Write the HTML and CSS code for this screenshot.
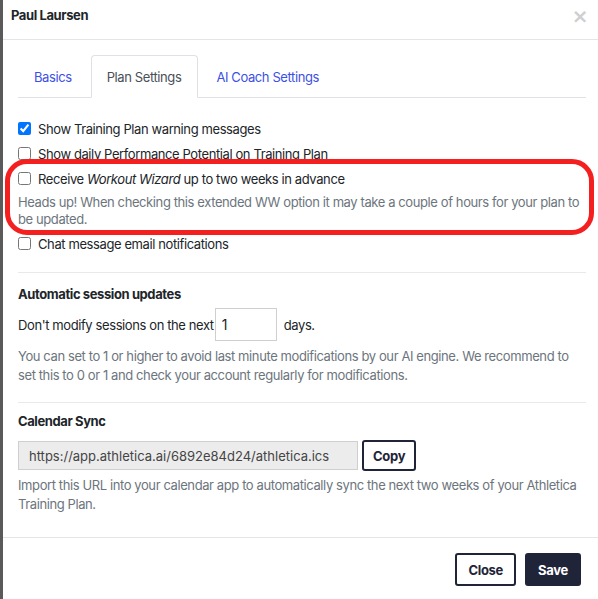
FILE: index.html
```html
<!DOCTYPE html>
<html lang="en">
<head>
    <meta charset="UTF-8">
    <title>Plan Settings</title>
    <link rel="stylesheet" href="styles.css">
</head>
<body>
    <div class="backdrop-edge"></div>
    <div class="modal">
        <div class="modal-header">
            <span class="modal-title">Paul Laursen</span>
            <span class="close-x">&times;</span>
        </div>

        <div class="modal-body">
            <ul class="tabs">
                <li class="tab"><a href="#">Basics</a></li>
                <li class="tab active"><a href="#">Plan Settings</a></li>
                <li class="tab"><a href="#">AI Coach Settings</a></li>
            </ul>

            <div class="section first">
                <label class="check-row"><input type="checkbox" checked> Show Training Plan warning messages</label>
                <label class="check-row"><input type="checkbox"> Show daily Performance Potential on Training Plan</label>
                <div class="highlight">
                    <label class="check-row"><input type="checkbox"> Receive&nbsp;<em>Workout Wizard</em>&nbsp;up to two weeks in advance</label>
                    <p class="help tight">Heads up! When checking this extended WW option it may take a couple of hours for your plan to be updated.</p>
                    <span class="ring"></span>
                </div>
                <label class="check-row"><input type="checkbox"> Chat message email notifications</label>
            </div>

            <div class="section updates">
                <h4>Automatic session updates</h4>
                <div class="inline-row days-row">
                    <span>Don't modify sessions on the next</span>
                    <input type="text" class="days-input" value="1">
                    <span>days.</span>
                </div>
                <p class="help">You can set to 1 or higher to avoid last minute modifications by our AI engine. We recommend to set this to 0 or 1 and check your account regularly for modifications.</p>
            </div>

            <div class="section last">
                <h4>Calendar Sync</h4>
                <div class="inline-row sync-row">
                    <input type="text" class="url-input" value="https://app.athletica.ai/6892e84d24/athletica.ics" readonly>
                    <button class="btn btn-outline">Copy</button>
                </div>
                <p class="help">Import this URL into your calendar app to automatically sync the next two weeks of your Athletica Training Plan.</p>
            </div>
        </div>

        <div class="modal-footer">
            <button class="btn btn-outline big">Close</button>
            <button class="btn btn-dark big">Save</button>
        </div>
    </div>
</body>
</html>
```

FILE: styles.css
```css
html, body {
    margin: 0;
    padding: 0;
    height: 100%;
    overflow: hidden;
}

body {
    font-family: 'Inter', 'Liberation Sans', sans-serif;
    font-size: 13px;
    letter-spacing: -0.4px;
    color: #212529;
    background: #5a5a5a;
    display: flex;
}

.backdrop-edge {
    width: 3px;
    flex-shrink: 0;
}

.modal {
    width: 598px;
    flex-shrink: 0;
    background: #fff;
    position: relative;
}

.modal-header {
    height: 39px;
    border-bottom: 1px solid #e5e5e5;
    display: flex;
    align-items: center;
    justify-content: space-between;
    padding: 0 13px 0 8px;
}

.modal-title {
    font-weight: 700;
    font-size: 13px;
    margin-top: -9px;
}

.close-x {
    font-family: 'DejaVu Sans', sans-serif;
    font-size: 20px;
    font-weight: 700;
    color: #cfcfcf;
    margin-top: -8px;
}

.modal-body {
    padding: 15px 15px 0 15px;
}

/* tabs */
.tabs {
    list-style: none;
    margin: 0;
    padding: 0;
    display: flex;
    border-bottom: 1px solid #dee2e6;
    height: 42px;
}

.tab {
    margin-right: 2px;
    margin-bottom: -1px;
    border: 1px solid transparent;
    border-radius: 4px 4px 0 0;
    display: flex;
    align-items: center;
    padding: 0 16px 0 15px;
}

.tab a {
    color: #3d50e6;
    text-decoration: none;
}

.tab.active {
    border-color: #dee2e6 #dee2e6 #fff;
    background: #fff;
}

.tab.active a {
    color: #495057;
}

/* sections */
.section {
    border-bottom: 1px solid #e9e9e9;
}

.section.first {
    padding: 18px 0 16px;
}

.section.updates {
    padding: 11px 0 17px;
}

.section.last {
    border-bottom: none;
    padding: 8px 0 0;
}

.check-row {
    display: flex;
    align-items: center;
    height: 25px;
}

.check-row input {
    width: 13px;
    height: 13px;
    margin: 0 7px 0 0;
}

.highlight {
    position: relative;
    padding-bottom: 3px;
}

.ring {
    position: absolute;
    left: -13px;
    top: -7px;
    right: -8px;
    bottom: -4px;
    border: 5px solid #f41f1f;
    border-radius: 22px;
    pointer-events: none;
}

.help {
    color: #6c757d;
    margin: 0;
    line-height: 19px;
}

.help.tight {
    line-height: 17px;
    margin-top: 3px;
}

h4 {
    margin: 0;
    font-size: 13px;
    font-weight: 700;
    line-height: 20px;
}

.inline-row {
    display: flex;
    align-items: center;
}

.days-row {
    margin: 4px 0 6px;
}

.sync-row {
    margin: 9px 0 5px;
}

.days-input {
    width: 48px;
    height: 31px;
    margin: 0 7px 0 1px;
    padding: 0 6px;
    border: 1px solid #cfcfcf;
    font: inherit;
    font-size: 14px;
    color: #212529;
    box-sizing: content-box;
}

.url-input {
    width: 318px;
    height: 27px;
    margin: 0 4px 0 0;
    padding: 0 10px;
    border: 1px solid #cfcfcf;
    background: #ececec;
    font: inherit;
    color: #444;
    box-sizing: content-box;
}

.btn {
    font-family: inherit;
    font-size: 13px;
    font-weight: 700;
    letter-spacing: -0.3px;
    border-radius: 3px;
    cursor: pointer;
    padding: 0 9px;
    height: 31px;
}

.btn-outline {
    background: #fff;
    color: #1f2438;
    border: 2px solid #1f2438;
}

.btn-dark {
    background: #1f2438;
    color: #fff;
    border: 2px solid #1f2438;
}

.btn.big {
    height: 33px;
    padding: 0 11px;
}

.modal-footer {
    border-top: 1px solid #e5e5e5;
    margin-top: 23px;
    padding: 15px 20px 15px 0;
    display: flex;
    justify-content: flex-end;
    gap: 9px;
}
```
